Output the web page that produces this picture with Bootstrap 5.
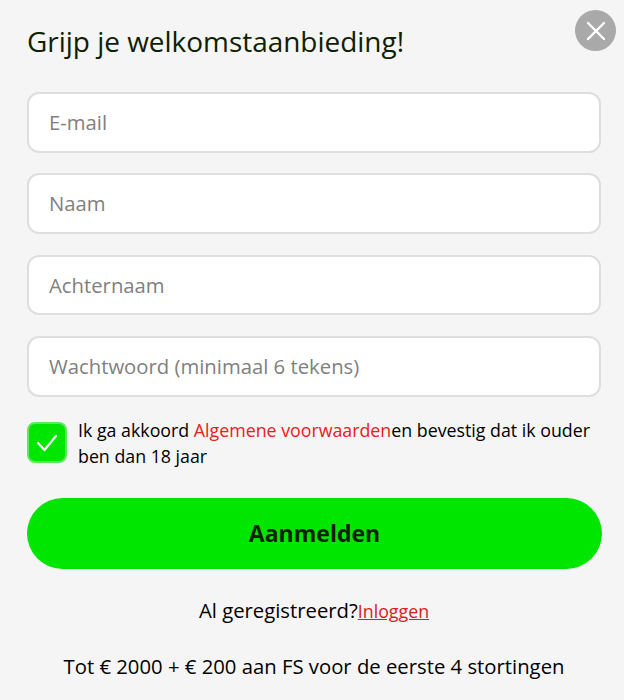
<!DOCTYPE html>
<html lang="nl">
<head>
<meta charset="utf-8">
<link href="https://cdn.jsdelivr.net/npm/bootstrap@5.3.0/dist/css/bootstrap.min.css" rel="stylesheet">
<style>
html,body{height:100%;}
body{background:#f5f5f5;font-family:"Open Sans","Noto Sans",sans-serif;color:#000;}
.signup-panel{width:624px;height:700px;padding:23px 23px 0 27px;position:relative;overflow:hidden;}
.signup-title{font-size:27.95px;line-height:36px;font-weight:400;color:#0d2100;margin:0 0 33px;}
.close-round{position:absolute;top:10px;right:8px;width:41px;height:41px;border-radius:50%;background:#a9a9a9;border:0;padding:0;display:flex;align-items:center;justify-content:center;}
.signup-input{height:60.5px;border:2px solid #dedede;border-radius:12px;font-size:20.3px;padding:0 20px 1px;color:#000;margin-bottom:20.9px;background:#fff;}
.signup-input::placeholder{color:#808080;opacity:1;}
.check-box{width:40px;height:41px;flex:none;border-radius:8px;background:#00e600;border:2px solid #5fe85f;display:flex;align-items:center;justify-content:center;}
.terms-row{margin-top:-1px;margin-bottom:29px;gap:11px;}
.terms-text{font-size:17.8px;line-height:26px;}
.terms-text a{color:#e82020;text-decoration:none;}
.signup-btn{height:71px;border-radius:36px;background:#00e600;border:0;color:#0d2100;font-size:23px;font-weight:700;width:575px;}
.login-line{font-size:20.3px;line-height:26px;margin-top:28px;}
.login-line a{color:#d92020;font-size:17.8px;}
.promo-line{font-size:20.3px;line-height:26px;margin-top:29px;}
</style>
</head>
<body>
<div class="signup-panel">
<button class="close-round" aria-label="Sluiten" type="button"><svg width="20" height="20" viewBox="0 0 20 20"><path d="M2 2L18 18M18 2L2 18" stroke="#fff" stroke-width="2.4" stroke-linecap="round"/></svg></button>
<h1 class="signup-title">Grijp je welkomstaanbieding!</h1>
<form>
<input class="form-control signup-input" placeholder="E-mail">
<input class="form-control signup-input" placeholder="Naam">
<input class="form-control signup-input" placeholder="Achternaam">
<input class="form-control signup-input" placeholder="Wachtwoord (minimaal 6 tekens)">
<div class="d-flex align-items-center terms-row">
<span class="check-box"><svg width="24" height="20" viewBox="0 0 24 20"><path d="M3 10L9.5 17L21 3" fill="none" stroke="#fff" stroke-width="2.2" stroke-linecap="round" stroke-linejoin="round"/></svg></span>
<div class="terms-text">Ik ga akkoord <a href="#">Algemene voorwaarden</a>en bevestig dat ik ouder ben dan 18 jaar</div>
</div>
<button class="btn signup-btn" type="button">Aanmelden</button>
<div class="login-line text-center">Al geregistreerd?<a href="#">Inloggen</a></div>
<div class="promo-line text-center">Tot € 2000 + € 200 aan FS voor de eerste 4 stortingen</div>
</form>
</div>
</body>
</html>
